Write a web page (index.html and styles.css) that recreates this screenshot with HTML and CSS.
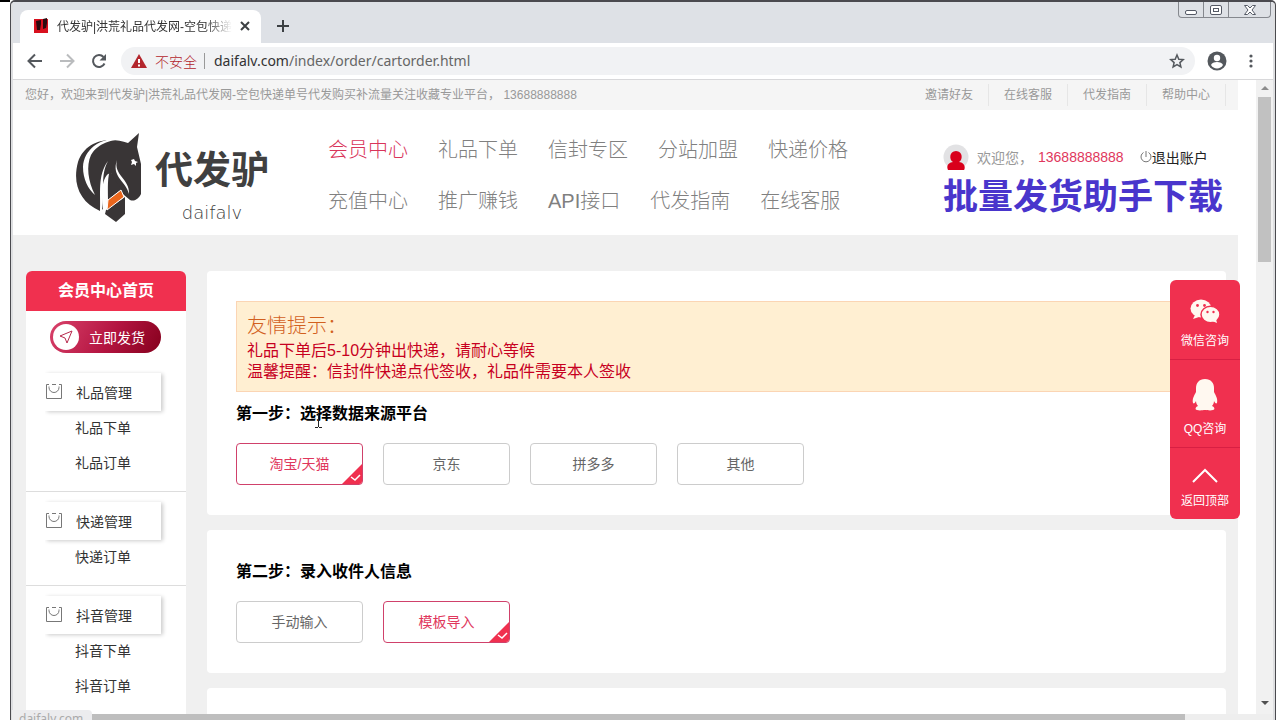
FILE: index.html
```html
<!DOCTYPE html>
<html lang="zh-CN">
<head>
<meta charset="utf-8">
<title>代发驴|洪荒礼品代发网</title>
<link rel="stylesheet" href="styles.css">
</head>
<body>
<svg class="defs" aria-hidden="true">
  <symbol id="bag" viewBox="0 0 18 18"><path d="M4 1.500H1.500V15.500H16.500V1.500H14M7 1.500H11" fill="none" stroke="#777"/><path d="M4 3.500V4.500a5 5 0 0 0 10 0V3.500" fill="none" stroke="#777"/></symbol>
</svg>
<div class="window">
  <div class="tabstrip">
    <div class="tab">
      <svg class="favicon" width="16" height="16" viewBox="0 0 16 16"><path d="M1 1h14v14H1z" fill="#d8101e"/><path d="M3 3l5-1v4l-1 6H4zM10 1l4-1v5l-1 5-3 1z" fill="#2a0b10"/></svg>
      <span class="tab-title">代发驴|洪荒礼品代发网-空包快递</span>
      <button class="icon-btn" aria-label="关闭标签"><svg width="10" height="10" viewBox="0 0 10 10"><path d="M1 1l8 8M9 1L1 9" stroke="#3c4043" stroke-width="2"/></svg></button>
    </div>
    <button class="icon-btn new-tab" aria-label="新标签"><svg width="12" height="12" viewBox="0 0 12 12"><path d="M6 0v12M0 6h12" stroke="#3c4043" stroke-width="2"/></svg></button>
    <div class="win-controls">
      <button aria-label="最小化"><svg width="14" height="12" viewBox="0 0 14 12"><rect x="1.500" y="6.500" width="11" height="4" rx="1.500" fill="#fff" stroke="#555a66"/></svg></button>
      <button aria-label="最大化"><svg width="14" height="12" viewBox="0 0 14 12"><rect x="1.500" y="1.500" width="11" height="9" rx="1.500" fill="#fff" stroke="#555a66"/><rect x="4.500" y="4.500" width="5" height="3" fill="#fff" stroke="#555a66"/></svg></button>
      <button class="win-close" aria-label="关闭"><svg width="14" height="12" viewBox="0 0 14 12"><path d="M1.500 1.500h3L7 4l2.500-2.500h3L9 6l3.500 4.500h-3L7 8l-2.500 2.500h-3L5 6z" fill="#fff" stroke="#555a66"/></svg></button>
    </div>
  </div>
  <div class="toolbar">
    <button class="icon-btn" aria-label="后退"><svg width="16" height="16" viewBox="0 0 16 16"><path d="M15 8H2M8 1.500L1.500 8 8 14.500" fill="none" stroke="#54585d" stroke-width="2"/></svg></button>
    <button class="icon-btn" aria-label="前进"><svg width="16" height="16" viewBox="0 0 16 16"><path d="M1 8h13M8 1.500L14.500 8 8 14.500" fill="none" stroke="#babcbe" stroke-width="2"/></svg></button>
    <button class="icon-btn" aria-label="刷新"><svg width="16" height="16" viewBox="0 0 16 16"><path d="M13.500 10.500A6 6 0 1 1 12.500 4" fill="none" stroke="#54585d" stroke-width="2"/><path d="M15 1v6.500H8.500z" fill="#54585d"/></svg></button>
    <div class="omnibox">
      <svg width="16" height="14" viewBox="0 0 16 14"><path d="M8 0l8 14H0z" fill="#b3262d"/><path d="M8 5v4M8 10.500v2" stroke="#fff" stroke-width="2"/></svg>
      <span class="insecure">不安全</span>
      <span class="url">daifalv.com<span class="path">/index/order/cartorder.html</span></span>
      <button class="icon-btn star" aria-label="收藏"><svg width="16" height="16" viewBox="0 0 16 16"><path d="M8 2l1.800 4.200 4.500.4-3.400 3 1 4.400L8 11.700 4.100 14l1-4.400-3.400-3 4.500-.4z" fill="none" stroke="#54585d" stroke-width="1.500"/></svg></button>
    </div>
    <button class="icon-btn" aria-label="用户"><svg width="20" height="20" viewBox="0 0 20 20"><circle cx="10" cy="10" r="9.500" fill="#54585d"/><circle cx="10" cy="7" r="3.200" fill="#fff"/><path d="M4 14c1-4 11-4 12 0a7 7 0 0 1-12 0z" fill="#fff"/></svg></button>
    <button class="icon-btn" aria-label="菜单"><svg width="16" height="16" viewBox="0 0 16 16"><g fill="#54585d"><circle cx="8" cy="3" r="1.600"/><circle cx="8" cy="8" r="1.600"/><circle cx="8" cy="13" r="1.600"/></g></svg></button>
  </div>

  <div class="viewport">
    <div class="page">
      <div class="topbar">
        <span>您好，欢迎来到代发驴|洪荒礼品代发网-空包快递单号代发购买补流量关注收藏专业平台， 13688888888</span>
        <nav class="top-links"><a href="#">邀请好友</a><a href="#">在线客服</a><a href="#">代发指南</a><a href="#">帮助中心</a></nav>
      </div>
      <header class="header">
        <a class="logo" href="#">
          <svg width="68" height="90" viewBox="0 0 68 90">
            <path d="M64 0L53 10C33 3 10 8 3 29c-6 22 2 40 22 49l3-2c-2-16-1-30 5-35l4-1c-1 11 6 17 12 22l6 5c5 2 9-2 11-6V31l-4-17z" fill="#393536"/>
            <path d="M50 6C29 3 9 14 8 34c0 12 5 22 12 28C13 48 11 33 16 22 24 9 37 7 50 6z" fill="#fff"/>
            <path d="M33 28c-8 15-3 28-6 50l-2 1c1-18-3-36 8-51zM42 27c-4 15 13 19 12 34-3-13-18-17-12-34z" fill="#fff"/>
            <path d="M36 34c0 9 5 15 11 22l-14 11c0-12-1-23 3-33zM31 77l19-13v17l-9 8-11-8z" fill="#393536"/>
            <path d="M46 57l3 7-17 13 1-10z" fill="#e9661d" stroke="#fff"/>
            <path d="M59 26l1 2 3 1-2 1v3l-2-2-3 1 1-3-1-2z" fill="#fff"/>
          </svg>
          <span class="wordmark"><span class="brand">代发驴</span><span class="latin">daifalv</span></span>
        </a>
        <nav class="main-nav">
          <div><a class="active" href="#">会员中心</a><a href="#">礼品下单</a><a href="#">信封专区</a><a href="#">分站加盟</a><a href="#">快递价格</a></div>
          <div><a href="#">充值中心</a><a href="#">推广赚钱</a><a href="#">API接口</a><a href="#">代发指南</a><a href="#">在线客服</a></div>
        </nav>
        <div class="account">
          <div class="welcome">
            <svg width="26" height="26" viewBox="0 0 26 26"><circle cx="13" cy="13" r="12.500" fill="#e2e2e4"/><path d="M13 7c7 0 7 9 3 11 7 1 6 7 5 8H5c-1-2-2-7 5-8-4-2-4-11 3-11z" fill="#d9001b"/></svg>
            <span class="hello">欢迎您，</span><span class="phone">13688888888</span>
            <a class="logout" href="#"><svg width="12" height="12" viewBox="0 0 12 12"><path d="M3.500 1.500a5 5 0 1 0 5 0M6 0v6" fill="none" stroke="#777"/></svg>退出账户</a>
          </div>
          <a class="download" href="#">批量发货助手下载</a>
        </div>
      </header>

      <div class="content">
        <aside class="sidebar">
          <h2>会员中心首页</h2>
          <button class="ship"><span class="ship-icon"><svg width="14" height="14" viewBox="0 0 14 14"><path d="M13 1L1 6l5 2 2 5z" fill="none" stroke="#b8294d"/></svg></span><span class="ship-text">立即发货</span></button>
          <section class="group"><h3><svg class="bag" width="18" height="18"><use href="#bag"/></svg>礼品管理</h3><a href="#">礼品下单</a><a href="#">礼品订单</a></section>
          <section class="group"><h3><svg class="bag" width="18" height="18"><use href="#bag"/></svg>快递管理</h3><a href="#">快递订单</a></section>
          <section class="group"><h3><svg class="bag" width="18" height="18"><use href="#bag"/></svg>抖音管理</h3><a href="#">抖音下单</a><a href="#">抖音订单</a></section>
        </aside>
        <main class="steps">
          <section class="card first">
            <div class="notice">
              <p class="notice-title">友情提示：</p>
              <p>礼品下单后5-10分钟出快递，请耐心等候</p>
              <p>温馨提醒：信封件快递点代签收，礼品件需要本人签收</p>
            </div>
            <h4>第一步：选择数据来源平台</h4>
            <div class="options">
              <label><input type="radio" name="platform" checked>淘宝/天猫<svg class="tick" width="20" height="20" viewBox="0 0 20 20"><path d="M20 0v20H0z" fill="#f0304f"/><path d="M9 13l4 3 5-5" fill="none" stroke="#fff" stroke-width="1.500"/></svg></label>
              <label><input type="radio" name="platform">京东</label>
              <label><input type="radio" name="platform">拼多多</label>
              <label><input type="radio" name="platform">其他</label>
            </div>
          </section>
          <section class="card">
            <h4>第二步：录入收件人信息</h4>
            <div class="options">
              <label><input type="radio" name="entry">手动输入</label>
              <label><input type="radio" name="entry" checked>模板导入<svg class="tick" width="20" height="20" viewBox="0 0 20 20"><path d="M20 0v20H0z" fill="#f0304f"/><path d="M9 13l4 3 5-5" fill="none" stroke="#fff" stroke-width="1.500"/></svg></label>
            </div>
          </section>
          <section class="card last"></section>
        </main>
      </div>
    </div>
    <div class="vscroll"><svg width="8" height="17" viewBox="0 0 8 17"><path d="M4 6l4 4H0z" fill="#8c8c8c"/></svg><div class="vthumb"></div><svg class="down" width="8" height="17" viewBox="0 0 8 17"><path d="M0 4h8l-4 4z" fill="#505050"/></svg></div>
  </div>
  <div class="hscroll"><div class="hthumb"></div></div>

  <aside class="float">
    <a href="#"><svg width="30" height="24" viewBox="0 0 30 24"><ellipse cx="11" cy="9.500" rx="10.500" ry="9" fill="#fff8f0"/><path d="M5 16l-2 4 6-2z" fill="#fff8f0"/><ellipse cx="20.500" cy="15.500" rx="9.500" ry="8.200" fill="#fff8f0" stroke="#f0304f" stroke-width="1.500"/><path d="M22 22l5 2-1-4z" fill="#fff8f0"/><g fill="#f0304f"><circle cx="7.500" cy="6.500" r="1.400"/><circle cx="14.500" cy="6.500" r="1.400"/><circle cx="17.500" cy="13" r="1.200"/><circle cx="23.500" cy="13" r="1.200"/></g></svg>微信咨询</a>
    <a href="#"><svg width="26" height="32" viewBox="0 0 26 32"><path d="M13 0c6 0 9 4 9 9v4c2 4 4 7 3 11-1 1-2 0-3-2 0 2-1 4-2 5 3 1 3 4 1 4-3 1-6 0-8 0s-5 1-8 0c-2 0-2-3 1-4-1-1-2-3-2-5-1 2-2 3-3 2-1-4 1-7 3-11V9c0-5 3-9 9-9z" fill="#fff8f0"/></svg>QQ咨询</a>
    <a href="#"><svg width="26" height="16" viewBox="0 0 26 16"><path d="M1 15L13 3l12 12" fill="none" stroke="#fff" stroke-width="2"/></svg>返回顶部</a>
  </aside>
  <div class="status">daifalv.com</div>
  <svg class="cursor" width="7" height="16" viewBox="0 0 7 16"><path d="M0 .5h3M4 .5h3M3.500 1v14M0 15.500h3M4 15.500h3" stroke="#222"/></svg>
</div>
</body>
</html>
```

FILE: styles.css
```css
* { box-sizing: border-box; }
body, h2, h3, h4, p { margin: 0; }
body {
  height: 100vh;
  padding: 0 4px 0 10px;
  overflow: hidden;
  background: linear-gradient(#000, #000) 0 0 / 10px 2px no-repeat #fff;
  font-family: "Liberation Sans", "Noto Sans CJK SC", sans-serif;
  font-size: 14px;
  color: #333;
}
a { color: inherit; text-decoration: none; }
button { padding: 0; border: 0; background: none; font: inherit; color: inherit; }
svg { display: block; flex: none; }
.defs { position: absolute; width: 0; height: 0; }
.window {
  position: relative;
  display: flex;
  flex-direction: column;
  height: 100vh;
  padding: 0 2px;
  border: 1px solid #4a4a4f;
  border-top-width: 2px;
  border-bottom: 0;
  border-radius: 5px 5px 0 0;
  background: #dedfe1;
}

.tabstrip { display: flex; height: 41px; flex: none; background: #dee1e6; }
.tab {
  display: flex;
  align-items: center;
  width: 241px;
  margin: 8px 0 0 7px;
  padding: 0 11px 2px 13px;
  border-radius: 8px 8px 0 0;
  background: #fff;
  font-size: 12px;
}
.tab-title {
  flex: 1;
  margin: 0 8px;
  overflow: hidden;
  white-space: nowrap;
  mask-image: linear-gradient(90deg, #000 85%, transparent);
}
.icon-btn { display: flex; align-items: center; justify-content: center; }
.new-tab { margin: 6px 0 0 16px; }
.win-controls {
  display: flex;
  height: 16px;
  margin-left: auto;
  margin-right: 2px;
  border: 1px solid #85888e;
  border-top: 0;
  border-radius: 0 0 4px 4px;
}
.win-controls button { display: flex; align-items: center; justify-content: center; width: 25px; border-right: 1px solid #85888e; }
.win-controls .win-close { width: 41px; border-right: 0; }

.toolbar {
  display: flex;
  align-items: center;
  gap: 16px;
  height: 37px;
  flex: none;
  padding: 0 14px;
  border-bottom: 1px solid #d8d8da;
  background: #fff;
}
.omnibox {
  display: flex;
  flex: 1;
  align-items: center;
  height: 28px;
  margin: 0 -4px 0 -2px;
  padding: 0 10px;
  border-radius: 14px;
  background: #f1f2f4;
}
.insecure { margin: 0 7px 0 8px; font-weight: 300; color: #b3262d; }
.url {
  padding-left: 9px;
  border-left: 1px solid #999;
  font-family: "Noto Sans", sans-serif;
  line-height: 16px;
  color: #333;
}
.path { color: #666; }
.star { margin-left: auto; }

.viewport { display: flex; flex: 1; min-height: 0; background: #fff; }
.page { flex: 1; min-width: 0; margin-right: 18px; overflow: hidden; background: #f0f0f0; }
.topbar {
  display: flex;
  justify-content: space-between;
  padding: 0 12px;
  background: #f5f5f5;
  font-size: 12px;
  line-height: 30px;
  color: #999;
  white-space: nowrap;
}
.top-links { display: flex; padding: 4px 0; line-height: 22px; }
.top-links a { padding: 0 15px; border-right: 1px solid #e6e6e6; }
.header { display: flex; height: 125px; padding: 0 15px 0 62px; background: #fff; }
.logo { display: flex; width: 253px; flex: none; padding-top: 23px; }
.wordmark { display: flex; flex-direction: column; padding-left: 12px; color: #404040; }
.brand { font-size: 38px; font-weight: 700; line-height: 74px; }
.latin { font-family: "DejaVu Sans", sans-serif; font-size: 18px; font-weight: 300; line-height: 12px; text-align: center; }
.main-nav { padding-top: 15px; font-size: 20px; font-weight: 300; line-height: 51px; color: #808080; }
.main-nav div { display: flex; gap: 30px; white-space: nowrap; }
.main-nav .active { color: #d9345a; }
.account { margin-left: auto; padding-top: 34px; white-space: nowrap; }
.welcome { display: flex; align-items: center; height: 26px; }
.hello { margin-left: 8px; width: 61px; color: #999; }
.phone { color: #e0375c; }
.logout { display: flex; align-items: center; margin-left: 16px; color: #222; }
.download { display: block; font-size: 35px; font-weight: 700; line-height: 54px; color: #4935cc; }

.content { display: flex; align-items: flex-start; gap: 21px; padding: 36px 12px 0 13px; }
.sidebar { width: 160px; flex: none; border-radius: 6px 6px 0 0; background: #fff; }
.sidebar h2 {
  border-radius: 6px 6px 0 0;
  background: #f0304f;
  color: #fff;
  font-size: 16px;
  line-height: 40px;
  text-align: center;
}
.ship {
  display: flex;
  align-items: center;
  width: 111px;
  height: 32px;
  margin: 10px 0 10px 24px;
  padding: 0 3px;
  border-radius: 16px;
  background: linear-gradient(120deg, #d9416a, #b31440 55%, #85001d);
  color: #fff;
}
.ship-icon { display: flex; align-items: center; justify-content: center; width: 26px; height: 26px; border-radius: 50%; background: #fff; }
.ship-text { margin-left: 10px; }
.group { padding: 10px 0; }
.group + .group { border-top: 1px solid #ddd; }
.group h3 {
  display: flex;
  align-items: center;
  gap: 13px;
  width: 116px;
  height: 38px;
  margin-left: 19px;
  clip-path: inset(-4px -8px -8px 0);
  box-shadow: 2px 1px 4px #ccc;
  font-size: 14px;
  font-weight: 400;
}
.group a { display: block; padding-left: 49px; line-height: 35px; }

.steps { display: flex; flex-direction: column; flex: 1; min-width: 0; gap: 15px; }
.card { padding: 20px 30px 30px 29px; border-radius: 4px; background: #fff; }
.card.first { padding-top: 30px; }
.card.last { min-height: 60px; }
.notice { padding: 11px 10px 9px; border: 1px solid #fbd5b4; background: #ffefd2; font-size: 16px; line-height: 21px; color: #c7001f; }
.notice .notice-title { font-size: 20px; font-weight: 300; line-height: 27px; color: #d2601e; }
.card h4 { margin-bottom: 7px; font-size: 16px; line-height: 44px; color: #000; }
.options { display: flex; flex-wrap: wrap; gap: 20px; }
.options label {
  position: relative;
  width: 127px;
  overflow: hidden;
  border: 1px solid #ccc;
  border-radius: 4px;
  line-height: 40px;
  text-align: center;
  color: #666;
}
.options input { position: absolute; opacity: 0; margin: 0; }
.options label:has(:checked) { border-color: #d0416b; color: #e0375c; }
.tick { position: absolute; right: 0; bottom: 0; }

.vscroll { display: flex; flex-direction: column; align-items: center; width: 17px; flex: none; background: #f1f1f1; }
.vthumb { width: 13px; height: 165px; background: #c1c1c1; }
.down { margin-top: auto; }
.hscroll { height: 6px; flex: none; background: #eee; }
.hthumb { width: 93%; height: 6px; background: #bebebe; }

.float {
  position: absolute;
  top: 278px;
  right: 35px;
  width: 70px;
  border-radius: 6px;
  background: #f0304f;
  color: #fff;
  font-size: 12px;
}
.float a { display: flex; flex-direction: column; align-items: center; gap: 8px; padding: 19px 0 8px; line-height: 20px; }
.float a + a { border-top: 1px solid #d81f43; }
.status {
  position: absolute;
  left: 1px;
  bottom: 0;
  width: 80px;
  height: 10px;
  padding-left: 7px;
  overflow: hidden;
  border-radius: 0 4px 0 0;
  background: #ececee;
  font-family: "Noto Sans", sans-serif;
  font-size: 12px;
  line-height: 18px;
  color: #aaa;
}
.cursor { position: absolute; left: 304px; top: 410px; }
```
